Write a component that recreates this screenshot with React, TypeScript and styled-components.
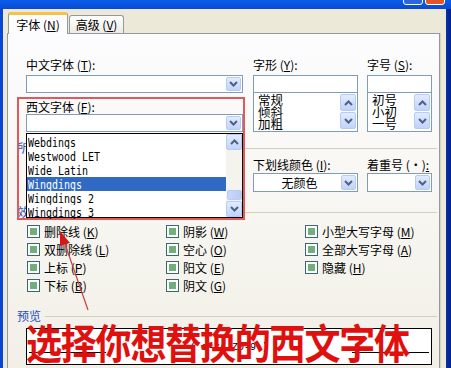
import React from 'react';
import styled, { createGlobalStyle } from 'styled-components';

/* --------------------------------- styles --------------------------------- */

const GlobalStyle = createGlobalStyle`
  html, body {
    margin: 0;
    padding: 0;
    background: #ece9d8;
  }
  body {
    font-family: "Noto Sans CJK SC", "Noto Sans", sans-serif;
    font-size: 12px;
    color: #000;
  }
  * {
    box-sizing: border-box;
  }
`;

const Window = styled.div`
  position: relative;
  width: 451px;
  height: 368px;
  overflow: hidden;
  display: flex;
  flex-direction: column;
  background: linear-gradient(90deg, #0b45d4 0%, #0a3fc8 98%, #00208a 100%);
`;

const TitleBar = styled.div`
  height: 9px;
  flex: none;
  overflow: hidden;
  display: flex;
  justify-content: flex-end;
  align-items: flex-end;
  gap: 2px;
  padding: 0 6px 4px 0;
  background: linear-gradient(#0a5ee8, #0848d4);
`;

const TitleButton = styled.div<{ $close?: boolean }>`
  width: 20px;
  height: 20px;
  flex: none;
  border: 1px solid #fff;
  border-radius: 3px;
  background: ${(p) => (p.$close ? '#e0562b' : '#2a66e2')};
`;

const Client = styled.div`
  flex: 1;
  min-height: 0;
  margin: 0 5px 0 3px;
  padding: 3px 6px 0 4px;
  background: #ece9d8;
  display: flex;
  flex-direction: column;
`;

const TabRow = styled.div`
  height: 22px;
  flex: none;
  display: flex;
  align-items: flex-end;
  gap: 1px;
  padding-left: 1px;
  margin-bottom: -1px;
  position: relative;
  z-index: 1;
`;

const Tab = styled.div<{ $active?: boolean }>`
  height: ${(p) => (p.$active ? 22 : 18)}px;
  width: ${(p) => (p.$active ? 60 : 55)}px;
  margin-bottom: ${(p) => (p.$active ? 0 : 1)}px;
  display: flex;
  align-items: center;
  justify-content: center;
  border: 1px solid #919b9c;
  border-bottom: none;
  border-top: ${(p) => (p.$active ? '3px solid #f7c24a' : '1px solid #919b9c')};
  border-radius: 3px 3px 0 0;
  background: ${(p) => (p.$active ? '#fcfcfe' : 'linear-gradient(#ffffff, #ecebe6)')};
  line-height: 14px;
`;

const Panel = styled.div`
  flex: 1;
  min-height: 0;
  border: 1px solid #919b9c;
  border-bottom: none;
  padding: 24px 7px 0 9px;
  background: linear-gradient(#fcfcfe 0%, #f8f7f3 45%, #f1efe6 100%);
  box-shadow: 1px 0 0 #d6d3c6;
`;

const Columns = styled.div<{ $top?: number }>`
  display: flex;
  align-items: flex-start;
  padding-left: 9px;
  margin-top: ${(p) => p.$top ?? 0}px;
`;

const Field = styled.div<{ $width: number; $gap?: number }>`
  width: ${(p) => p.$width}px;
  margin-left: ${(p) => p.$gap ?? 0}px;
  flex: none;
  display: flex;
  flex-direction: column;
`;

const Label = styled.div<{ $top?: number }>`
  height: 14px;
  line-height: 14px;
  white-space: nowrap;
  margin-top: ${(p) => p.$top ?? 0}px;
`;

const Key = styled.span`
  text-decoration: underline;
`;

const Combo = styled.div<{ $top?: number; $height?: number }>`
  height: ${(p) => p.$height ?? 18}px;
  margin-top: ${(p) => p.$top ?? 0}px;
  border: 1px solid #7f9db9;
  background: #fff;
  display: flex;
  align-items: center;
  padding: 1px;
`;

const ComboText = styled.div<{ $center?: boolean }>`
  flex: 1;
  text-align: ${(p) => (p.$center ? 'center' : 'left')};
  padding-left: 3px;
  line-height: 14px;
  white-space: nowrap;
`;

const XpButton = styled.div<{ $h?: number; $w?: number }>`
  width: ${(p) => p.$w ?? 15}px;
  height: ${(p) => p.$h ?? 15}px;
  flex: none;
  display: flex;
  align-items: center;
  justify-content: center;
  border: 1px solid #b8cbf4;
  border-radius: 2px;
  background: linear-gradient(#e3ebfd, #c1d3fb);
`;

const TextInput = styled.div`
  height: 18px;
  margin-top: 3px;
  border: 1px solid #7f9db9;
  background: #fff;
`;

const ListBox = styled.div`
  height: 40px;
  margin-top: -1px;
  border: 1px solid #7f9db9;
  background: #fff;
  display: flex;
  padding: 1px;
`;

const ListItems = styled.div`
  flex: 1;
  padding-left: 3px;
  line-height: 12px;
  font-size: 12.5px;
`;

const MiniScroll = styled.div`
  width: 16px;
  display: flex;
  flex-direction: column;
  gap: 1px;
`;

const GroupHeader = styled.div<{ $top: number }>`
  height: 14px;
  margin-top: ${(p) => p.$top}px;
  margin-right: -5px;
  display: flex;
  align-items: center;
  gap: 4px;
`;

const GroupLabel = styled.span`
  color: #1f4ec0;
  line-height: 14px;
  white-space: nowrap;
`;

const GroupLine = styled.div`
  flex: 1;
  height: 1px;
  margin-top: 1px;
  background: #d0d0bf;
`;

const EffectGrid = styled.div`
  display: grid;
  grid-template-columns: 139px 139px auto;
  grid-auto-rows: 18px;
  padding-left: 10px;
  margin-top: 3px;
`;

const EffectItem = styled.div`
  display: flex;
  align-items: center;
  gap: 4px;
  white-space: nowrap;
`;

const CheckBox = styled.div`
  width: 13px;
  height: 13px;
  flex: none;
  border: 1px solid #3c6670;
  background: #fff;
  padding: 2px;
`;

const CheckFill = styled.div`
  width: 100%;
  height: 100%;
  background: #72ad7c;
`;

const PreviewBox = styled.div`
  height: 37px;
  margin: 5px 0 0 9px;
  border: 1px solid #000;
  background: #fff;
  display: flex;
  align-items: center;
  justify-content: space-between;
  padding: 2px 2px 0;
`;

const BaseLine = styled.div`
  width: 77px;
  height: 1px;
  margin-top: 10px;
  background: #000;
`;

const PreviewText = styled.span`
  font-family: "Liberation Mono", monospace;
  font-size: 10px;
  white-space: pre;
`;

/* -------------------------------- overlays -------------------------------- */

const RedFrame = styled.div`
  position: absolute;
  left: 17px;
  top: 97px;
  width: 228px;
  height: 123px;
  border: 2px solid #e2585b;
  pointer-events: none;
`;

const DropList = styled.div`
  position: absolute;
  left: 26px;
  top: 133px;
  width: 217px;
  height: 85px;
  border: 1px solid #000;
  background: #fff;
  display: flex;
`;

const DropItems = styled.div`
  flex: 1;
  padding-top: 1px;
`;

const DropItem = styled.div<{ $selected?: boolean }>`
  height: 14px;
  line-height: 14px;
  padding-left: 1px;
  background: ${(p) => (p.$selected ? '#316ac5' : 'transparent')};
  color: ${(p) => (p.$selected ? '#fff' : '#000')};
  white-space: nowrap;
  overflow: hidden;
`;

const DropItemText = styled.span`
  display: inline-block;
  font-family: "DejaVu Sans Mono", monospace;
  font-size: 12px;
  transform: scaleX(0.83);
  transform-origin: left center;
`;

const ScrollBar = styled.div`
  width: 16px;
  display: flex;
  flex-direction: column;
  background: #f4f3ee;
`;

const ScrollTrack = styled.div`
  flex: 1;
  display: flex;
  flex-direction: column;
  justify-content: flex-end;
  padding-bottom: 1px;
`;

const ScrollThumb = styled.div`
  height: 10px;
  margin: 0 0 0 1px;
  border: 1px solid #b8cbf4;
  border-radius: 2px;
  background: linear-gradient(90deg, #c9d8fc, #b8cbf7);
`;

const Arrow = styled.svg`
  position: absolute;
  left: 0;
  top: 0;
  pointer-events: none;
`;

const Caption = styled.div`
  position: absolute;
  left: 26px;
  top: 320px;
  font-family: "Noto Sans CJK SC", sans-serif;
  font-size: 36px;
  font-weight: 700;
  line-height: 36px;
  letter-spacing: -1.2px;
  color: #e0100e;
  white-space: nowrap;
  transform: scaleY(1.15);
  transform-origin: left top;
`;

/* -------------------------------- component ------------------------------- */

const Chevron = ({ up }: { up?: boolean }) => (
  <svg width="9" height="6" viewBox="0 0 9 6">
    <path
      d={up ? 'M1 5 L4.5 1.5 L8 5' : 'M1 1 L4.5 4.5 L8 1'}
      stroke="#4d6185"
      strokeWidth="2"
      fill="none"
    />
  </svg>
);

const DropCombo = ({ text, center, top, height }: { text?: string; center?: boolean; top?: number; height?: number }) => (
  <Combo $top={top} $height={height}>
    <ComboText $center={center}>{text}</ComboText>
    <XpButton $h={height ? height - 4 : 14}>
      <Chevron />
    </XpButton>
  </Combo>
);

const SizeList = ({ items }: { items: string[] }) => (
  <ListBox>
    <ListItems>
      {items.map((item) => (
        <div key={item}>{item}</div>
      ))}
    </ListItems>
    <MiniScroll>
      <XpButton $h={17} $w={16}>
        <Chevron up />
      </XpButton>
      <XpButton $h={17} $w={16}>
        <Chevron />
      </XpButton>
    </MiniScroll>
  </ListBox>
);

const fontOptions = ['Webdings', 'Westwood LET', 'Wide Latin', 'Wingdings', 'Wingdings 2', 'Wingdings 3'];

const effects: [string, string][] = [
  ['删除线', 'K'],
  ['阴影', 'W'],
  ['小型大写字母', 'M'],
  ['双删除线', 'L'],
  ['空心', 'O'],
  ['全部大写字母', 'A'],
  ['上标', 'P'],
  ['阳文', 'E'],
  ['隐藏', 'H'],
  ['下标', 'B'],
  ['阴文', 'G'],
];

const App = (): JSX.Element => {
  return (
    <>
      <GlobalStyle />
      <Window>
        <TitleBar>
          <TitleButton />
          <TitleButton $close />
        </TitleBar>
        <Client>
          <TabRow>
            <Tab $active>
              字体 (<Key>N</Key>)
            </Tab>
            <Tab>
              高级 (<Key>V</Key>)
            </Tab>
          </TabRow>
          <Panel>
            <Columns>
              <Field $width={217}>
                <Label>
                  中文字体 (<Key>T</Key>):
                </Label>
                <DropCombo top={3} />
                <Label $top={7}>
                  西文字体 (<Key>F</Key>):
                </Label>
                <DropCombo />
              </Field>
              <Field $width={105} $gap={10}>
                <Label>
                  字形 (<Key>Y</Key>):
                </Label>
                <TextInput />
                <SizeList items={['常规', '倾斜', '加粗']} />
              </Field>
              <Field $width={65} $gap={9}>
                <Label>
                  字号 (<Key>S</Key>):
                </Label>
                <TextInput />
                <SizeList items={['初号', '小初', '一号']} />
              </Field>
            </Columns>

            <GroupHeader $top={9}>
              <GroupLabel>所有文字</GroupLabel>
              <GroupLine />
            </GroupHeader>
            {/* the left part of this row sits under the open font list */}
            <Columns>
              <Field $width={217}>
                <Label $top={3} />
                <DropCombo top={1} height={19} />
              </Field>
              <Field $width={105} $gap={10}>
                <Label $top={3}>
                  下划线颜色 (<Key>I</Key>):
                </Label>
                <DropCombo top={1} height={19} text="无颜色" center />
              </Field>
              <Field $width={65} $gap={9}>
                <Label $top={3}>
                  着重号 (•)<Key>:</Key>
                </Label>
                <DropCombo top={1} height={19} />
              </Field>
            </Columns>

            <GroupHeader $top={13}>
              <GroupLabel>效果</GroupLabel>
              <GroupLine />
            </GroupHeader>
            <EffectGrid>
              {effects.map(([name, key]) => (
                <EffectItem key={name}>
                  <CheckBox>
                    <CheckFill />
                  </CheckBox>
                  <span>
                    {name} (<Key>{key}</Key>)
                  </span>
                </EffectItem>
              ))}
            </EffectGrid>

            <GroupHeader $top={15}>
              <GroupLabel>预览</GroupLabel>
              <GroupLine />
            </GroupHeader>
            <PreviewBox>
              <BaseLine />
              <PreviewText>( a-zA-Z0-9 )</PreviewText>
              <BaseLine />
            </PreviewBox>
          </Panel>
        </Client>

        <RedFrame />
        <DropList>
          <DropItems>
            {fontOptions.map((font) => (
              <DropItem key={font} $selected={font === 'Wingdings'}>
                <DropItemText>{font}</DropItemText>
              </DropItem>
            ))}
          </DropItems>
          <ScrollBar>
            <XpButton $h={16} $w={16}>
              <Chevron up />
            </XpButton>
            <ScrollTrack>
              <ScrollThumb />
            </ScrollTrack>
            <XpButton $h={16} $w={16}>
              <Chevron />
            </XpButton>
          </ScrollBar>
        </DropList>

        <Arrow width="451" height="368" viewBox="0 0 451 368">
          <line x1="88" y1="310" x2="65" y2="244" stroke="#c8403c" strokeWidth="1.2" />
          <polygon points="60,231 70,243 60,246" fill="#d21818" />
        </Arrow>
        <Caption>选择你想替换的西文字体</Caption>
      </Window>
    </>
  );
};

export default App;
